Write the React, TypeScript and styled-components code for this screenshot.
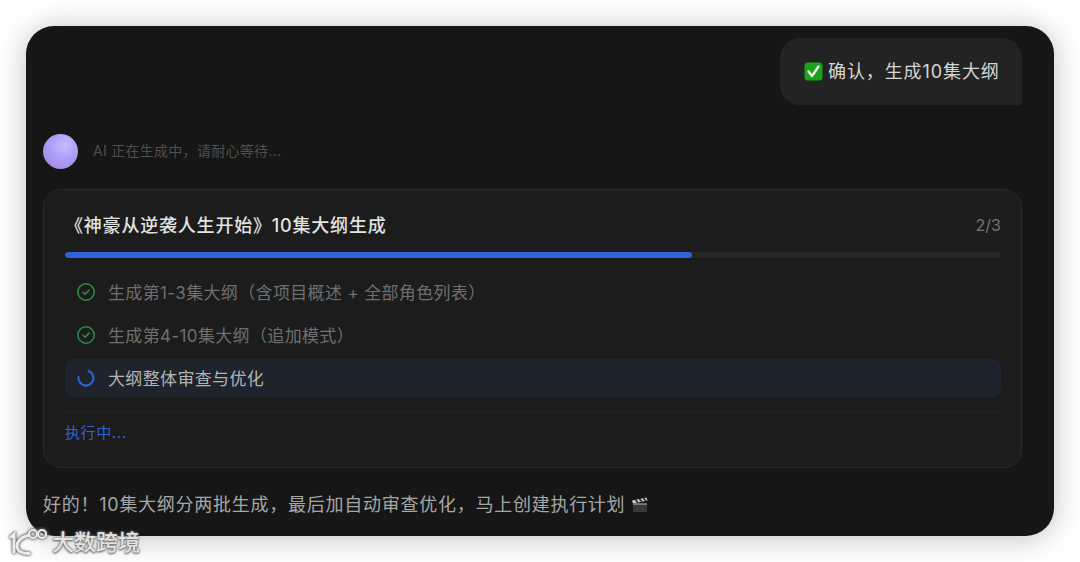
import React from "react";
import styled, { createGlobalStyle } from "styled-components";

const Global = createGlobalStyle`
  html, body { margin: 0; padding: 0; background: #fff; }
  body { font-family: Inter, "Noto Sans CJK SC", sans-serif; overflow: hidden; }
`;

const Stage = styled.div`
  position: relative;
  width: 1080px;
  height: 562px;
  padding: 26px;
  box-sizing: border-box;
  overflow: hidden;
  background: #fff;
`;

const Panel = styled.main`
  height: 510px;
  box-sizing: border-box;
  padding: 12px 32px 0 17px;
  background: #161616;
  border-radius: 28px;
  box-shadow: 0 2px 30px rgba(0, 0, 0, 0.25);
  overflow: hidden;
  display: flex;
  flex-direction: column;
`;

const UserBubble = styled.div`
  align-self: flex-end;
  width: 242px;
  height: 67px;
  box-sizing: border-box;
  padding-left: 24px;
  display: flex;
  align-items: center;
  gap: 5px;
  background: #232323;
  border-radius: 20px 20px 4px 20px;
  color: #d6d6d6;
  font-size: 18px;
  letter-spacing: 0.9px;
`;

const BubbleText = styled.span`
  padding-bottom: 4px;
`;

const StatusRow = styled.div`
  margin-top: 28px;
  display: flex;
  align-items: center;
  gap: 15px;
  height: 36px;
`;

const Avatar = styled.div`
  width: 35px;
  height: 35px;
  border-radius: 50%;
  background: radial-gradient(circle at 62% 32%, #c6bcfb 0%, #ab9ffb 42%, #a88fe6 72%, #5f5680 100%);
`;

const StatusText = styled.span`
  color: #4f4f4f;
  font-size: 14px;
  letter-spacing: 0.28px;
  padding-bottom: 2px;
`;

const Card = styled.section`
  margin-top: 20px;
  height: 279px;
  box-sizing: border-box;
  padding: 21px 20px 0 21px;
  background: #1c1c1c;
  border: 1px solid #2a2a2a;
  border-radius: 18px;
  display: flex;
  flex-direction: column;
`;

const CardHead = styled.div`
  height: 26px;
  display: flex;
  align-items: center;
  justify-content: space-between;
`;

const CardTitle = styled.h2`
  margin: 0;
  color: #e2e2e2;
  font-size: 18px;
  font-weight: 500;
  letter-spacing: 0.8px;
`;

const Counter = styled.span`
  color: #757575;
  font-size: 16px;
  padding-top: 1px;
`;

const Track = styled.div`
  margin-top: 15px;
  height: 6px;
  border-radius: 3px;
  background: #272727;
  overflow: hidden;
`;

const Fill = styled.div`
  height: 100%;
  border-radius: 3px;
  background: #2f62d9;
`;

const Steps = styled.div`
  margin-top: 15px;
  display: flex;
  flex-direction: column;
  gap: 5px;
`;

const Step = styled.div<{ $active?: boolean }>`
  height: 38px;
  padding-left: 11px;
  display: flex;
  align-items: center;
  gap: 12px;
  border-radius: 8px;
  background: ${(p) => (p.$active ? "#1e232c" : "transparent")};
  color: ${(p) => (p.$active ? "#b4b4b4" : "#6f6f6f")};
  font-size: 17px;
  letter-spacing: 0.35px;
`;

const StepLabel = styled.span`
  padding-bottom: 2px;
`;

const Foot = styled.div`
  margin-top: 15px;
  padding-top: 9px;
  border-top: 1px solid #242424;
  color: #2f62d9;
  font-size: 15px;
  line-height: 22px;
  letter-spacing: 0.6px;
`;

const Reply = styled.p`
  margin: 25px 0 0;
  display: flex;
  align-items: center;
  gap: 6px;
  color: #a6a6a6;
  font-size: 18px;
  line-height: 24px;
  letter-spacing: 0.74px;
`;

const Watermark = styled.div`
  position: absolute;
  left: 9px;
  top: 526px;
  display: flex;
  align-items: center;
  gap: 3px;
  color: #e4e4e4;
  font-size: 22px;
  font-weight: 500;
  line-height: 32px;
  text-shadow: 0 0 2px #666, 0 0 3px #888, 0 1px 2px #666;
  svg { filter: drop-shadow(0 0 1px #555) drop-shadow(0 0 1.5px #888); }
`;

const CheckIcon = () => (
  <svg width="20" height="20" viewBox="0 0 20 20" fill="none">
    <circle cx="10" cy="10" r="8.2" stroke="#2f8a42" strokeWidth="1.6" />
    <path d="M7 10.2l2.1 2.1 4-4.2" stroke="#2f8a42" strokeWidth="1.6" strokeLinecap="round" strokeLinejoin="round" />
  </svg>
);

const SpinnerIcon = () => (
  <svg width="20" height="20" viewBox="0 0 20 20" fill="none">
    <path d="M9 2.600A7.500 7.500 0 1 1 3 12.800" stroke="#2f62d9" strokeWidth="2.2" strokeLinecap="round" transform="rotate(28 10 10)" />
  </svg>
);

const EmojiCheck = () => (
  <svg width="19" height="19" viewBox="0 0 19 19">
    <rect x="0.5" y="0.5" width="18" height="18" rx="3.5" fill="#1aa31a" />
    <path d="M4.5 9.5l3.6 4.4 6.4-9.4" fill="none" stroke="#f4f4f4" strokeWidth="2.4" strokeLinecap="round" strokeLinejoin="round" />
  </svg>
);

const Clapper = () => (
  <svg width="18" height="18" viewBox="0 0 18 18">
    <rect x="2" y="8" width="14" height="8" fill="#3a3a3a" />
    <path d="M1 4.5L15.5 1.5l1 3L2 7.5z" fill="#c8c8c8" />
    <path d="M4.5 3.8l2.2 2.6M8.5 3l2.2 2.6M12.5 2.2l2.2 2.6" stroke="#222" strokeWidth="1.5" />
    <path d="M2 8h14" stroke="#aaa" strokeWidth="1.2" />
  </svg>
);

const WatermarkLogo = () => (
  <svg width="40" height="30" viewBox="0 0 40 30" fill="none" stroke="#ececec" strokeWidth="3" strokeLinecap="round">
    <path d="M2 10l3-2.500V25" />
    <path d="M20 8c-7 2-12 6-12 11 0 5 5 7.500 12 7.500" />
    <circle cx="24" cy="7" r="4" strokeWidth="2" />
    <circle cx="33" cy="7" r="4" strokeWidth="2" />
  </svg>
);

export default function App() {
  return (
    <Stage>
      <Global />
      <Panel>
        <UserBubble>
          <EmojiCheck />
          <BubbleText>确认，生成10集大纲</BubbleText>
        </UserBubble>
        <StatusRow>
          <Avatar />
          <StatusText>AI 正在生成中，请耐心等待...</StatusText>
        </StatusRow>
        <Card>
          <CardHead>
            <CardTitle>《神豪从逆袭人生开始》10集大纲生成</CardTitle>
            <Counter>2/3</Counter>
          </CardHead>
          <Track>
            <Fill style={{ width: "67%" }} />
          </Track>
          <Steps>
            <Step><CheckIcon /><StepLabel>生成第1-3集大纲（含项目概述 + 全部角色列表）</StepLabel></Step>
            <Step><CheckIcon /><StepLabel>生成第4-10集大纲（追加模式）</StepLabel></Step>
            <Step $active><SpinnerIcon /><StepLabel>大纲整体审查与优化</StepLabel></Step>
          </Steps>
          <Foot>执行中...</Foot>
        </Card>
        <Reply>
          好的！10集大纲分两批生成，最后加自动审查优化，马上创建执行计划
          <Clapper />
        </Reply>
      </Panel>
      <Watermark>
        <WatermarkLogo />
        <span>大数跨境</span>
      </Watermark>
    </Stage>
  );
}
